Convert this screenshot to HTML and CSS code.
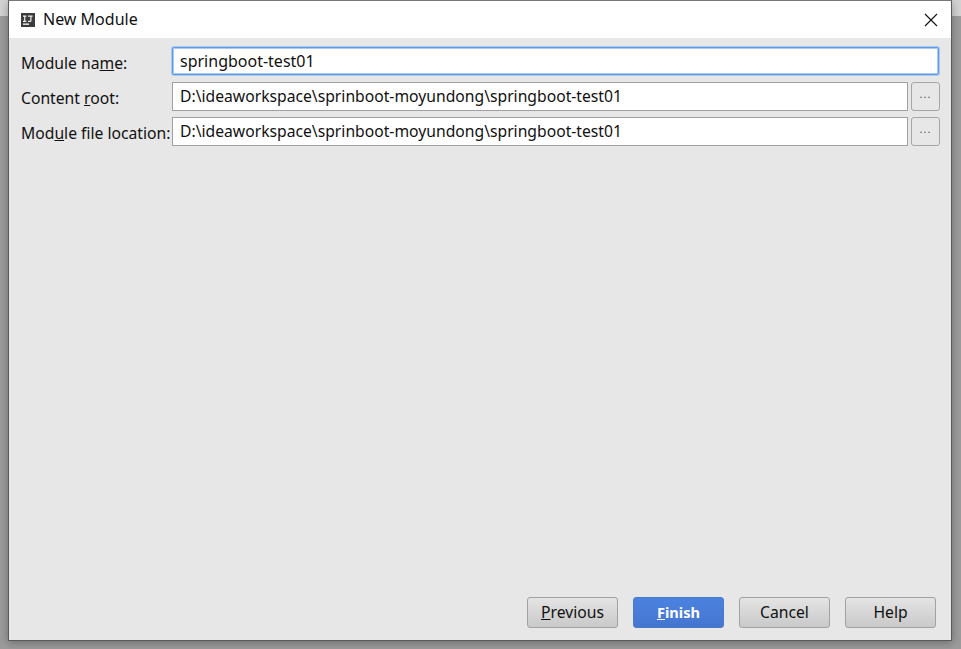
FILE: index.html
```html
<!DOCTYPE html>
<html lang="en">
<head>
<meta charset="utf-8">
<title>New Module</title>
<link rel="stylesheet" href="styles.css">
</head>
<body>
<div class="dialog">
  <header class="titlebar">
    <svg class="app-icon" width="14" height="14" viewBox="0 0 14 14" aria-hidden="true">
      <rect width="14" height="14" fill="#3c3c3c"/>
      <rect x="2" y="10.500" width="6" height="1.300" fill="#fff"/>
      <path d="M2 2.500h3.400v1.200H4.300v4h1.100v1.200H2V7.700h1.100v-4H2zM7 2.500h4.600v1.200h-1.100v3.700q0 1.500-1.500 1.500H7V7.700h1.600q.7 0 .7-.5V3.700H7z" fill="#ececec"/>
    </svg>
    <span class="title">New Module</span>
    <svg class="close" width="14" height="14" viewBox="0 0 14 14" aria-hidden="true">
      <path d="M1 1l12 12M13 1L1 13" stroke="#111" stroke-width="1.100" fill="none"/>
    </svg>
  </header>
  <main class="content">
    <form class="form">
      <div class="row row-first">
        <label class="label">Module na<u>m</u>e:</label>
        <input class="field field-focus" type="text" value="springboot-test01">
      </div>
      <div class="row">
        <label class="label">Content <u>r</u>oot:</label>
        <input class="field" type="text" value="D:\ideaworkspace\sprinboot-moyundong\springboot-test01">
        <button class="browse" type="button">...</button>
      </div>
      <div class="row">
        <label class="label">Mod<u>u</u>le file location:</label>
        <input class="field" type="text" value="D:\ideaworkspace\sprinboot-moyundong\springboot-test01">
        <button class="browse" type="button">...</button>
      </div>
    </form>
    <footer class="actions">
      <button class="btn" type="button"><u>P</u>revious</button>
      <button class="btn btn-primary" type="button"><u>F</u>inish</button>
      <button class="btn" type="button">Cancel</button>
      <button class="btn" type="button">Help</button>
    </footer>
  </main>
</div>
</body>
</html>
```
FILE: styles.css
```css
* { box-sizing: border-box; }
html, body { height: 100%; }
body {
  margin: 0;
  overflow: hidden;
  background: linear-gradient(#d2d2d2 0 16px, #9b9b9b 16px);
  font-family: "Noto Sans", "Open Sans", sans-serif;
  font-size: 15.700px;
  color: #111;
}
.dialog {
  width: 944px;
  height: 641px;
  margin-left: 8px;
  display: flex;
  flex-direction: column;
  border: 1px solid #5a5a5a;
  border-top-color: #777;
  box-shadow: 0 2px 8px rgba(0, 0, 0, .3);
  background: #e7e7e7;
}
.titlebar {
  height: 37px;
  flex: none;
  display: flex;
  align-items: center;
  padding: 0 13px 0 12px;
  background: #fff;
}
.app-icon { flex: none; margin-right: 8px; }
.title { flex: 1; font-size: 16px; line-height: 20px; padding-bottom: 1px; }
.close { flex: none; }
.content {
  flex: 1;
  display: flex;
  flex-direction: column;
  justify-content: space-between;
  padding: 9px 11px 12px 12px;
}
.form { display: flex; flex-direction: column; gap: 6px; }
.row { display: flex; align-items: center; height: 29px; }
.row-first { height: 28px; margin-bottom: 1px; }
.label {
  width: 151px;
  flex: none;
  white-space: nowrap;
  line-height: 20px;
  position: relative;
  top: 1px;
}
.row-first .label { top: 2px; }
.field {
  flex: 1;
  min-width: 0;
  height: 29px;
  padding: 0 7px 2px;
  border: 1px solid #a0a0a0;
  background: #fff;
  font: inherit;
  color: #111;
  outline: none;
}
.field-focus {
  height: 28px;
  margin-right: 1px;
  padding: 0 7px 0;
  border: 1px solid #5f9be8;
  border-radius: 2px;
  font-size: 16px;
  box-shadow: 0 0 0 1px #a9c9f0, inset 0 0 0 1px #a9c9f0;
}
.browse {
  flex: none;
  width: 29px;
  height: 29px;
  margin: 0 0 0 3px;
  padding: 0 0 6px;
  border: 1px solid #a6a6a6;
  border-radius: 3px;
  background: #e7e7e7;
  font: 11px/1 "Noto Sans", sans-serif;
  letter-spacing: 1px;
  color: #555;
}
.actions { display: flex; justify-content: flex-end; gap: 15px; padding-right: 4px; }
.btn {
  width: 91px;
  height: 31px;
  padding: 0 0 2px;
  border: 1px solid #a2a2a2;
  border-radius: 3px;
  background: linear-gradient(#e4e4e4, #c9c9c9);
  font: inherit;
  color: #111;
}
.btn-primary {
  border-color: #4a7bc8;
  background: linear-gradient(#4c82e0, #4476cf);
  color: #fff;
  font-weight: 700;
  font-size: 14.600px;
}
```
